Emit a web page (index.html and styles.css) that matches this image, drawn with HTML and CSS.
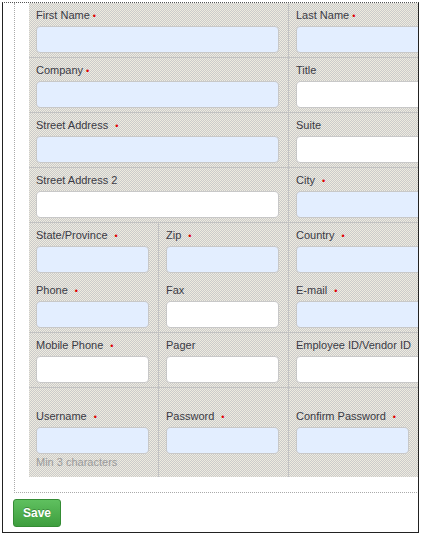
FILE: index.html
```html
<!DOCTYPE html>
<html lang="en">
<head>
  <meta charset="UTF-8">
  <title>Contact Details</title>
  <link rel="stylesheet" href="styles.css">
</head>
<body>
  <div class="frame">
    <div class="panel">
      <div class="grid">
        <div class="row">
          <div class="cell span2"><label>First Name<span class="req tight">&bull;</span></label><input type="text" class="wide need"></div>
          <div class="cell span2"><label>Last Name<span class="req tight">&bull;</span></label><input type="text" class="wide need"></div>
        </div>
        <div class="row">
          <div class="cell span2"><label>Company<span class="req tight">&bull;</span></label><input type="text" class="wide need"></div>
          <div class="cell span2"><label>Title</label><input type="text" class="wide"></div>
        </div>
        <div class="row">
          <div class="cell span2"><label>Street Address<span class="req">&bull;</span></label><input type="text" class="wide need"></div>
          <div class="cell span2"><label>Suite</label><input type="text" class="wide"></div>
        </div>
        <div class="row">
          <div class="cell span2"><label>Street Address 2</label><input type="text" class="wide"></div>
          <div class="cell span2"><label>City<span class="req">&bull;</span></label><input type="text" class="wide need"></div>
        </div>
        <div class="row open">
          <div class="cell"><label>State/Province<span class="req">&bull;</span></label><input type="text" class="need"></div>
          <div class="cell"><label>Zip<span class="req">&bull;</span></label><input type="text" class="need"></div>
          <div class="cell span2"><label>Country<span class="req">&bull;</span></label><input type="text" class="wide need"></div>
        </div>
        <div class="row">
          <div class="cell"><label>Phone<span class="req">&bull;</span></label><input type="text" class="need"></div>
          <div class="cell"><label>Fax</label><input type="text"></div>
          <div class="cell span2"><label>E-mail<span class="req">&bull;</span></label><input type="text" class="wide need"></div>
        </div>
        <div class="row">
          <div class="cell"><label>Mobile Phone<span class="req">&bull;</span></label><input type="text"></div>
          <div class="cell"><label>Pager</label><input type="text"></div>
          <div class="cell span2"><label>Employee ID/Vendor ID</label><input type="text" class="wide"></div>
        </div>
        <div class="row last">
          <div class="cell"><label>Username<span class="req">&bull;</span></label><input type="text" class="need"><div class="hint">Min 3 characters</div></div>
          <div class="cell"><label>Password<span class="req">&bull;</span></label><input type="password" class="need"></div>
          <div class="cell"><label>Confirm Password<span class="req">&bull;</span></label><input type="password" class="need"></div>
          <div class="cell"></div>
        </div>
      </div>
    </div>
    <button type="button" class="save">Save</button>
  </div>
</body>
</html>
```

FILE: styles.css
```css
body { margin: 0; padding: 0; background: #fff; font-family: "Liberation Sans", Arial, sans-serif; }
.frame { box-sizing: border-box; width: 417px; height: 531px; margin: 2px 0 0 2px; border: 1px solid #222; border-top: 1px dotted #555; overflow: hidden; background: #fff; }
.panel { width: 640px; margin-left: 11px; padding: 0 0 15px 14px; border-left: 1px dotted #aaa; border-bottom: 1px dotted #aaa; }
.grid { background: repeating-conic-gradient(#cbcbcb 0 25%, #eeebdf 0 50%) 0 0 / 2px 2px; }
.row { display: grid; grid-template-columns: 130px 130px 130px 130px; border-bottom: 1px solid #c2c2c2; }
.row.open { border-bottom-color: transparent; }
.row.last { border-bottom: none; }
.cell { box-sizing: border-box; padding: 6px 0 4px 7px; border-right: 1px solid #c2c2c2; }
.span2 { grid-column: span 2; }
.row.last .cell { padding-top: 22px; padding-bottom: 8px; }
label { display: block; height: 13px; font-size: 11px; line-height: 13px; color: #3a3a44; white-space: nowrap; }
.req { color: #e00000; font-size: 9px; margin-left: 7px; }
.req.tight { margin-left: 3px; }
input { display: block; box-sizing: border-box; width: 113px; height: 27px; margin-top: 4px; padding: 4px 6px; border: 1px solid #c8c8c8; border-radius: 4px; background: #fff; font-family: inherit; font-size: 12px; }
input.wide { width: 243px; }
input.need { background: #e3eeff; }
.hint { margin-top: 2px; font-size: 11px; line-height: 13px; color: #9a9a9a; }
.save { display: block; box-sizing: border-box; width: 48px; height: 28px; margin: 6px 0 0 10px; padding: 0; background: linear-gradient(#5fc05f, #3e9e3e); color: #fff; border: 1px solid #348c34; border-radius: 3px; font-family: inherit; font-size: 12px; font-weight: bold; text-shadow: 0 -1px 0 rgba(0,0,0,0.25); cursor: pointer; }
```
